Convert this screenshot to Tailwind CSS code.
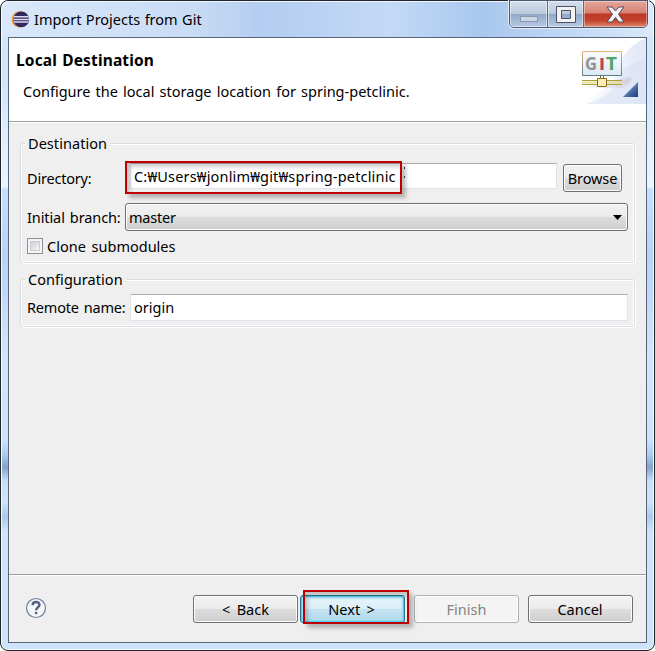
<!DOCTYPE html>
<html lang="en">
<head>
<meta charset="utf-8">
<title>Import Projects from Git</title>
<script src="https://cdn.jsdelivr.net/npm/@tailwindcss/browser@4"></script>
</head>
<body class="w-[655px] h-[651px] overflow-hidden bg-white font-['Noto_Sans','Noto_Sans_CJK_KR',sans-serif] text-[14.5px] leading-5 text-black whitespace-nowrap">
<div class="relative flex flex-col w-[655px] h-[651px] rounded-[8px] border border-[#20242b] bg-[#cfe4fb] px-[7px] shadow-[inset_0_0_0_1px_#f4faff] bg-[linear-gradient(180deg,#cbdcf2_0px,#d5e6fa_36px,#d3e5fa_80px,#ebf5ff_186px,#c7dffa_188px,#b9d2ef_255px,#c4daf4_300px,#d0e4fb_350px,#cfe4fc_438px,#a9c9ec_455px,#83a3c7_466px,#c9dff8_480px,#cfe4fc_500px,#b0c9e4_516px,#cfe4fc_530px,#cfe4fc_650px)]">
  <!-- title bar -->
  <div class="flex h-9 shrink-0 items-start -mx-[6px] pl-[9px] rounded-t-[7px] bg-[linear-gradient(90deg,#d9e8fa_0px,#c9dcf5_190px,#b4cdf0_260px,#c3d9f6_390px,#a9c7ee_480px,#c1d8f5_570px,#dbe9fa_652px)] shadow-[inset_0_1px_0_#eff7ff]">
    <svg class="mt-[9px] w-[19px] h-[19px] shrink-0" viewBox="0 0 19 19">
      <circle cx="8.8" cy="9.4" r="8.2" fill="#ef9d42"/><circle cx="10.2" cy="9.4" r="7.9" fill="#302a60"/>
      <path d="M3 6.8h14.5M2.5 9.4h15.5M3 12h14.5" stroke="#dcdcef" stroke-width="1.5"/>
    </svg>
    <div class="mt-[8px] ml-[4px] w-[170px] [word-spacing:0.7px]">Import Projects from Git</div>
    <div class="ml-auto mr-[5px] -mt-px flex h-[28px] w-[139px] rounded-b-[5px] border border-[#4b5870] overflow-hidden shadow-[0_0_0_1px_#e0edfb]">
      <div class="w-[38px] border-r border-[#5c6a82] bg-[linear-gradient(#d4dfed_0%,#bac9dd_48%,#91a6c5_50%,#b6cae6_100%)] shadow-[inset_0_0_0_1px_#ffffff80] flex justify-center pt-[15px]"><div class="w-[18px] h-[6px] border border-[#8a98ae] bg-[#cbd5e3]"></div></div>
      <div class="w-[36px] border-r border-[#5c6a82] bg-[linear-gradient(#d4dfed_0%,#bac9dd_48%,#91a6c5_50%,#b6cae6_100%)] shadow-[inset_0_0_0_1px_#ffffff80] flex justify-center pt-[5px]">
        <svg class="w-5 h-[17px]" viewBox="0 0 20 17"><path d="M.5 .5h19v16H.5zM5.500 4.500v8h9v-8z" fill="#f3f3f3" stroke="#4b5469" fill-rule="evenodd"/></svg>
      </div>
      <div class="flex-1 bg-[linear-gradient(#e4a79d_0%,#d78073_46%,#bb3826_50%,#c3432d_75%,#de8b73_100%)] shadow-[inset_0_0_0_1px_#ffffff60] flex justify-center pt-[5px]">
        <svg class="w-[19px] h-[17px]" viewBox="0 0 19 17"><path d="M1 1h5l3.500 4L13 1h5l-5.500 7.200L18 16h-5l-3.500-4.500L6 16H1l5.500-7.800z" fill="#f4f4f4" stroke="#53495a" stroke-linejoin="round"/></svg>
      </div>
    </div>
  </div>
  <!-- dialog -->
  <div class="flex flex-col w-[639px] h-[606px] shrink-0 border border-[#566579] bg-[#efefef]">
    <div class="flex h-[84px] shrink-0 bg-white border-b border-[#9d9d9d]">
      <div class="pt-[12px] pl-[7px]">
        <div class="font-bold text-[15.5px] tracking-[0.15px] [word-spacing:1px]">Local Destination</div>
        <div class="mt-[11px] ml-[7px] [word-spacing:1.4px]">Configure the local storage location for spring-petclinic.</div>
      </div>
      <svg class="ml-auto w-[75px] h-[66px] shrink-0" viewBox="571 38 75 66">
        <defs>
          <linearGradient id="swoosh" x1="0" x2="1" y1=".6" y2=".3"><stop stop-color="#fff"/><stop offset="1" stop-color="#e2e8f6"/></linearGradient>
          <linearGradient id="corner" x1="0" y1="0" x2="1" y2="1"><stop stop-color="#8cc0ed"/><stop offset="1" stop-color="#1c377b"/></linearGradient>
          <linearGradient id="board" x2="0" y2="1"><stop stop-color="#fafcff"/><stop offset="1" stop-color="#dce9f5"/></linearGradient>
          <linearGradient id="boardEdge" x2="0" y2="1"><stop stop-color="#e1b578"/><stop offset="1" stop-color="#587f84"/></linearGradient>
          <linearGradient id="shade" x2="1" y2="0"><stop stop-color="#fff"/><stop offset="1" stop-color="#d2d0df"/></linearGradient>
        </defs>
        <path d="M646 38v66h-75q45-10 52-47 8-13 23-19z" fill="url(#swoosh)"/>
        <path d="M646 60v44h-60q30-9 38-35 9-7 22-9z" fill="#d4def4" opacity=".5"/>
        <path d="M580 88l50-11q5 2-7 11z" fill="url(#shade)"/>
        <path d="M638 82v15h-15z" fill="url(#corner)"/>
        <path d="M582.500 51.500h39v24h-39z" fill="url(#board)" stroke="url(#boardEdge)"/>
        <g font-family="Noto Sans" font-weight="700" font-size="17"><text x="585" y="70" fill="#929292" textLength="12" lengthAdjust="spacingAndGlyphs">G</text><text x="606" y="70" fill="#50a464" textLength="11" lengthAdjust="spacingAndGlyphs">T</text><text x="599" y="70" fill="#bd4855" textLength="6" lengthAdjust="spacingAndGlyphs" font-family="Liberation Sans">I</text></g>
        <path d="M582 80.500h40M582 84.500h40" stroke="#aaa03c"/><path d="M582 82.500h40" stroke="#e5df9a" stroke-width="2"/>
        <path d="M600.500 76v3M603.500 76v3" stroke="#8a6e2c"/>
        <path d="M597.500 78.500h9v8h-9z" fill="#fcedbb" stroke="#8a6c1b"/>
      </svg>
    </div>
    <div class="h-[452px] shrink-0 border-t border-white px-[11px] pt-[20px]">
      <!-- destination group -->
      <fieldset class="relative h-[120px] w-[615px] rounded-[3px] border border-[#d5dfe5] shadow-[inset_0_0_0_1px_#fff,1px_1px_0_#fff]">
        <div class="absolute left-[4px] top-[-11px] bg-[#efefef] px-[3px] tracking-[0.05px]">Destination</div>
        <div class="flex pl-[6px] pt-[19px] items-start">
          <div class="w-[103px] pt-[5px] tracking-[-0.2px]">Directory:</div>
          <div class="w-[427px] h-[26px] bg-white border border-[#e2e3ea] border-t-[#abadb3] rounded-[1px] pl-[3px] leading-[25px] tracking-[0.17px]">C:₩Users₩jonlim₩git₩spring-petclinic</div>
          <button class="ml-[6px] mt-px w-[59px] h-[28px] rounded-[3px] border border-[#707070] shadow-[inset_0_0_0_1px_#fcfcfc] bg-[linear-gradient(#f2f2f2_0%,#ebebeb_48%,#dddddd_50%,#cfcfcf_100%)] tracking-[-0.1px]">Browse</button>
        </div>
        <div class="flex pl-[6px] mt-[11px]">
          <div class="w-[98px] pt-[4px] tracking-[-0.1px] [word-spacing:1.4px]">Initial branch:</div>
          <div class="flex items-center justify-between w-[503px] h-[28px] rounded-[3px] border border-[#707070] shadow-[inset_0_0_0_1px_#fcfcfc] bg-[linear-gradient(#f2f2f2_0%,#ebebeb_48%,#dddddd_50%,#cfcfcf_100%)] pl-[3px] pr-[5px]"><span class="tracking-[-0.2px]">master</span><svg class="w-[9px] h-[5px]" viewBox="0 0 9 5"><path d="M0 0h9L4.500 5z"/></svg></div>
        </div>
        <div class="flex pl-[6px] mt-[5px] items-center">
          <div class="w-4 h-4 border border-[#8e8f8f] bg-[#f4f4f4] p-[2px]"><div class="w-full h-full border border-[#c9cdd2] bg-linear-to-br from-[#cbcfd5] to-[#f6f6f6]"></div></div>
          <div class="ml-1 [word-spacing:2px]">Clone submodules</div>
        </div>
      </fieldset>
      <!-- configuration group -->
      <fieldset class="relative mt-[16px] h-[48px] w-[615px] rounded-[3px] border border-[#d5dfe5] shadow-[inset_0_0_0_1px_#fff,1px_1px_0_#fff]">
        <div class="absolute left-[4px] top-[-11px] bg-[#efefef] px-[3px] tracking-[0.05px]">Configuration</div>
        <div class="flex pl-[6px] pt-[14px]">
          <div class="w-[103px] pt-[3px] tracking-[-0.2px] [word-spacing:1.5px]">Remote name:</div>
          <div class="w-[498px] h-[27px] bg-white border border-[#e2e3ea] border-t-[#abadb3] rounded-[1px] pl-[3px] leading-[24px]">origin</div>
        </div>
      </fieldset>
    </div>
    <!-- button bar -->
    <div class="flex flex-1 border-t border-[#9d9d9d] shadow-[inset_0_1px_0_#fff] pt-5 pl-[16px] items-start">
      <svg class="w-[22px] h-[22px] mt-[2px]" viewBox="0 0 22 22"><circle cx="11" cy="11" r="9.500" fill="#f6f6f6" stroke="#70809d" stroke-width="1.200"/><path d="M7.600 8.200C7.800 3.800 14.700 4 14.400 8.100C14.200 10.300 11.100 10.600 11.100 13.300" fill="none" stroke="#526287" stroke-width="2.500"/><path d="M9.900 14.800h2.400v2.300H9.900z" fill="#526287"/></svg>
      <button class="ml-[146px] w-[105px] h-[28px] rounded-[3px] border border-[#707070] shadow-[inset_0_0_0_1px_#fcfcfc] bg-[linear-gradient(#f2f2f2_0%,#ebebeb_48%,#dddddd_50%,#cfcfcf_100%)] [word-spacing:2.5px]">&lt; Back</button>
      <button class="ml-[2px] w-[105px] h-[28px] rounded-[3px] border border-[#2c758f] shadow-[inset_0_0_0_1px_#4fcdf2,inset_0_0_2px_2px_#8fdcf3] bg-[linear-gradient(#e9f4fa_0%,#dceff8_48%,#c5e4f2_50%,#b3d9ec_100%)] pr-[2px] [word-spacing:2.5px]">Next &gt;</button>
      <button class="ml-[9px] w-[105px] h-[28px] rounded-[3px] border border-[#adb2b5] shadow-[inset_0_0_0_1px_#fcfcfc] bg-[#f4f4f4] text-[#838383]">Finish</button>
      <button class="ml-[9px] w-[105px] h-[28px] rounded-[3px] border border-[#707070] shadow-[inset_0_0_0_1px_#fcfcfc] bg-[linear-gradient(#f2f2f2_0%,#ebebeb_48%,#dddddd_50%,#cfcfcf_100%)] pr-[1px]">Cancel</button>
    </div>
  </div>
  <!-- highlight frames -->
  <div class="absolute left-[124px] top-[160px] w-[277px] h-[33px] border-2 border-[#c00000] shadow-[4px_4px_4px_#00000040,inset_3px_4px_4px_#00000030]"></div>
  <div class="absolute left-[403px] top-[166px] w-px h-[11px] border-y-2 border-[#333]"></div>
  <div class="absolute left-[302px] top-[589px] w-[106px] h-[34px] border-2 border-[#c00000] shadow-[4px_4px_4px_#00000040,inset_3px_4px_4px_#00000030]"></div>
</div>
</body>
</html>
